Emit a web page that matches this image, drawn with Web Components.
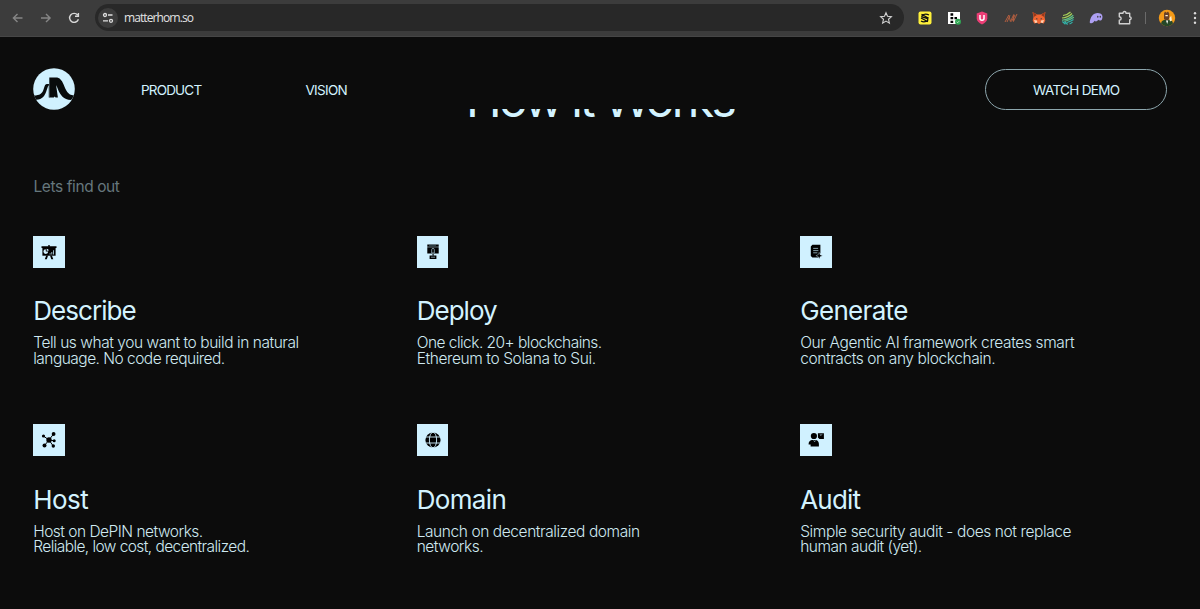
<!DOCTYPE html>
<html lang="en"><head><meta charset="utf-8"><title>Matterhorn</title>
<style>html,body{margin:0;background:#0c0c0c;height:609px;overflow:hidden}body{font-family:Inter,"Liberation Sans",sans-serif;color:#d3f3ff}</style></head>
<body><matter-app></matter-app>
<script>
const define=(name,html,setup)=>{
  const t=document.createElement('template');t.innerHTML=html;
  customElements.define(name,class extends HTMLElement{
    connectedCallback(){
      if(this.shadowRoot)return;
      this.attachShadow({mode:'open'}).append(t.content.cloneNode(true));
      if(setup)setup(this,this.shadowRoot);
    }
  });
};

// A single line tracked so that it fills the width in its "w" attribute.
define('tracked-line','<style>:host{display:block;white-space:nowrap}span{display:inline-block}</style><span><slot></slot></span>',(el,r)=>{
  const s=r.querySelector('span'),n=el.textContent.length;
  const extra=(+el.getAttribute('w')-s.getBoundingClientRect().width)/n;
  s.style.letterSpacing=extra.toFixed(3)+'px';
});

const icons={
describe:'<path d="M.5 2.2h6.8V1h1.4v1.2h6.8V4H.5z"/><path d="M1.4 4h13.2v7.7H1.4z"/><path d="M5.2 11.5h1.9L5.8 15.2H3.8zM9 11.5h1.9l1.4 3.7h-2z"/><path d="M4.8 5.2a2.4 2.4 0 1 0 2.4 2.4H4.8z" fill="#d0f1ff"/><path d="M5.7 4.7v2h2a2 2 0 0 0-2-2" fill="#d0f1ff"/><path d="M8.6 9.2h1v1.4h-1zM10.3 8h1v2.6h-1zM12 6.2h1v4.4h-1z" fill="#9dbcc7"/>',
deploy:'<path d="M2.3.6h11.4v2.2H2.3zM2.3 3.2h11.4v6.4H2.3zM7.2 9h1.6v3H7.2zM4.6 11.5h6.8v3.5H4.6z"/><path d="M6.7 7V5.7a1.3 1.3 0 0 1 2.6 0V9H6.7V7M7.9 9v2.8M6 13.2h4" fill="none" stroke="#a9c9d5" stroke-width=".7"/><path d="M4 1.6h7" stroke="#517078" stroke-width=".6"/>',
generate:'<path d="M4.4.8h8v8.4l-2.2 2v2.2H4.4L2.8 12V2.4z"/><path d="M5.2 4.4h4.9M5.2 6.6h5.2M5.2 8.8h4.2" stroke="#8fabb5" stroke-width=".9"/><path d="m11.2 8.4 1 2.3 2.3 1-2.3 1-1 2.3-1-2.3-2.3-1 2.3-1z" stroke="#d0f1ff" stroke-width=".4"/>',
host:'<path d="M8 8 2.4 4M8 8l4.5-6M8 8l-4.6 5.6M8 8l4.2 6M8 8l5.2.8" stroke="#000" stroke-width="1"/><circle cx="8" cy="8" r="2.7"/><circle cx="2.5" cy="4" r="1.6"/><circle cx="12.6" cy="2" r="1.9"/><circle cx="3.5" cy="13.6" r="2"/><circle cx="12.3" cy="14" r="1.7"/><circle cx="13.2" cy="8.8" r="1.5"/>',
domain:'<circle cx="8" cy="8" r="7.6"/><g fill="none" stroke="#d0f1ff" stroke-width=".9"><ellipse cx="8" cy="8" rx="3.6" ry="7.8"/><path d="M.5 5h15M.5 11h15"/></g>',
audit:'<circle cx="5.9" cy="4" r="3.1"/><path d="M.6 12.4c-.2-2.6 1.2-4.2 3.2-4.5h4.1c2 .3 3 2 3 4.2v2.5H2.6v-2zM9.9 1.2h6v5.7h-4.5L9.9 5.4z"/><path d="m12.2 2.2.3 1.2 1.8-1M5.7 8.2l.9 1.6.9-1.4" fill="none" stroke="#9dbcc7" stroke-width=".7"/>'};

define('feature-card',`<style>:host{display:block}
.i{width:31.5px;height:31.5px;background:#d0f1ff;display:grid;place-items:center;margin-left:.3px}
h2{font-size:26px;line-height:32px;font-weight:400;margin:27px 0 0}
.b{font-size:15.5px;font-weight:300;line-height:15.7px;margin-top:8.3px;color:#cfe9f1}
:host([lower]) h2{margin-top:28.2px}:host([lower]) .b{margin-top:7.6px}
svg{width:16px;height:16px;display:block}</style>
<div class="i"><svg viewBox="0 0 16 16"></svg></div><h2><slot name="title"></slot></h2><div class="b"><slot></slot></div>`,
(el,r)=>{r.querySelector('svg').innerHTML=icons[el.getAttribute('icon')]});

define('browser-bar',`<style>:host{display:flex;box-sizing:border-box;height:37px;background:#3c3c3c;border-bottom:1px solid #464646;align-items:center;padding:0 0 1px 10px}
.nav{display:flex;gap:12px;margin-right:13px}svg{display:block;flex:none}
.url{display:flex;align-items:center;width:809px;flex:none;height:27px;border-radius:14px;background:#282828;box-sizing:border-box;padding:0 11px 0 3px;font:12px "Open Sans","Noto Sans",sans-serif;color:#e3e3e3}
.url tracked-line{flex:1;margin-left:6px}
.ext{display:flex;flex:none;gap:12.5px;margin-left:13px}.sep{flex:none;width:1px;height:12px;background:#6a6a6a;margin:0 12px 0 12px}</style>
<div class="nav">
<svg width="16" height="16" viewBox="0 0 16 16" fill="none" stroke="#858585" stroke-width="1.4"><path d="M12.5 8H3.5M7.5 3.9 3.4 8l4.1 4.1"/></svg>
<svg width="16" height="16" viewBox="0 0 16 16" fill="none" stroke="#858585" stroke-width="1.4"><path d="M3 8h9M8 3.9 12.1 8 8 12.1"/></svg>
<svg width="16" height="16" viewBox="0 0 16 16" fill="none" stroke="#d8d8d8" stroke-width="1.4"><path d="M12.4 9.2A4.5 4.5 0 1 1 11.6 5M12.4 2.9v3.3H9"/></svg></div>
<div class="url"><svg width="20" height="20" viewBox="0 0 20 20"><circle cx="10" cy="10" r="10" fill="#3c3c3c"/><g fill="none" stroke="#dedede" stroke-width="1.3"><circle cx="7" cy="7" r="1.5"/><path d="M10 7h4.5M5 12.8h5"/><circle cx="13" cy="12.8" r="1.5"/></g></svg>
<tracked-line w="69">matterhorn.so</tracked-line>
<svg width="14" height="14" viewBox="0 0 14 14" fill="none" stroke="#d2d2d2" stroke-width="1.1"><path d="m7 1.7 1.5 3.6 3.9.4-2.9 2.6.9 3.8L7 10.1l-3.4 2 .9-3.8-2.9-2.6 3.9-.4z"/></svg></div>
<div class="ext">
<svg width="16" height="16" viewBox="0 0 16 16"><rect x="1.5" y="1.5" width="13" height="13" rx="2" fill="#fff13b"/><path d="M12 5C8 3 4 5 5 7l5 1.4c3 2.7-3 4.4-6 2.6M4.5 4.2l7.2 4M4 8l7 3.8" fill="none" stroke="#111" stroke-width="1.3"/></svg>
<svg width="16" height="16" viewBox="0 0 16 16"><path fill="#fff" d="M2 2h12v12H2z"/><path d="M4.5 3.2h2.7v2.5H4.5zM4.5 7h2.7v2.3H4.5zM8.5 7H11v2.3H8.5zM4.5 10.7h2.7V13H4.5z"/><circle cx="12" cy="11.8" r="3" fill="#30a653"/><path d="m10.7 11.8 1 .9 1.7-1.8" stroke="#fff" fill="none" stroke-width=".6"/></svg>
<svg width="16" height="16" viewBox="0 0 16 16"><path d="m8 1.6 5.3 1.9v4.8c0 3-2.1 4.5-5.3 6.2-3.2-1.7-5.3-3.2-5.3-6.2V3.5z" fill="#ec3e76"/><path d="M6 5v3.4c0 2.3 4 2.3 4 0V5" fill="none" stroke="#fff" stroke-width="1.5"/></svg>
<svg width="16" height="16" viewBox="0 0 16 16" fill="none" stroke="#b15e40" stroke-width="1"><path d="m2 12 3.8-7 1.6 6.5 3.4-7-.4 7L14 4M4 12l3-6.5M8.5 11.5 12 5"/></svg>
<svg width="16" height="16" viewBox="0 0 16 16"><path d="m1.5 2 4.7 2.5h3.6L14.5 2l-1 5 .8 3.5-1.5 3-3-.8-1 1H7.2l-1-1-3 .8-1.5-3L2.5 7z" fill="#ef6431"/><path d="m2 2 4 3-3.2 2zM14 2l-4 3 3.2 2z" fill="#93391e"/><path d="m3 10 3 .5.3 2L4 13zm10 0-3 .5-.3 2L12 13z" fill="#ffd0b0"/><path d="m5 8 1.5.6L6 10zM11 8l-1.5.6.5 1.4z" fill="#29384b"/></svg>
<svg width="16" height="16" viewBox="0 0 16 16" fill="none" stroke-width="1.15"><path d="M3 5.5c3-.5 5-1 7.5-3.5M2 8c5-.3 7-1.5 10-4.5" stroke="#a5cf58"/><path d="M2 10.2c5-.6 8-2 11.3-5M4.5 11.5c4-1 6-2 9.4-4.3" stroke="#60bf88"/><path d="M7 12.5c3-.8 4.8-1.8 6.5-3M9.5 14c1.3-.5 2.2-1 3-2M2.4 11.5l3 2.7M4.6 11.5l3 3" stroke="#31b5ac"/></svg>
<svg width="16" height="16" viewBox="0 0 16 16"><path d="M1.7 12.5C2.3 7 5 3 9.7 3c4 0 5.7 2.8 4.4 6-.8 2.3-3 1.7-4 .8-.7 1.4-2.4 2.4-3.4 1-1 1.5-3.3 3.8-5 1.7" fill="#ad9ff2"/><ellipse cx="9.8" cy="6.7" rx=".7" ry="1" fill="#3c3c3c"/><ellipse cx="12.3" cy="6.7" rx=".7" ry="1" fill="#3c3c3c"/></svg>
<svg width="16" height="16" viewBox="0 0 16 16" fill="none" stroke="#d0d0d0" stroke-width="1.4"><path d="M2.3 3.2H6V3a1.5 1.5 0 0 1 3 0v.2h3.7v3.7h.1a1.4 1.4 0 0 1 0 2.8h-.1v4H2.3v-3.4c2.5-.3 2.5-3.2 0-3.6z" stroke-linejoin="round"/></svg></div>
<div class="sep"></div>
<svg width="18" height="18" viewBox="0 0 18 18"><circle cx="9" cy="9" r="8.2" fill="#f39a18"/><path d="M3 14.5c.5-3 2.5-4 6-4s5.7 1 6 4c-3 3.4-9 3.4-12 0" fill="#264728"/><path d="M6 4.5 7 2.4l1.5 1.4L10 2.5l1.3 2v5L9 12l-3-2z" fill="#684027"/><path d="M7.4 6h2.4v1.2H7.4zM11.5 9l1.7-2.2.7 4.7-2 1z" fill="#fff0d4"/><path d="m8 11.5 1.2 3.4 1-3.4z" fill="#fff"/></svg>
<svg width="16" height="16" viewBox="0 0 16 16" fill="#dcdcdc" style="margin-left:11px"><circle cx="8" cy="3.2" r="1.2"/><circle cx="8" cy="8" r="1.2"/><circle cx="8" cy="12.8" r="1.2"/></svg>`);

define('site-header',`<style>:host{display:flex;box-sizing:border-box;height:72px;align-items:flex-start;padding:31px 33px 0 32.5px;font-size:13.5px;line-height:18px}
svg{display:block;margin-right:66.5px}.p{width:164.5px}.p,.v{margin-top:12.5px}.btn{margin:.6px 0 0 auto;box-sizing:border-box;width:182px;height:41px;border:1px solid #8ca6ad;border-radius:21px;display:flex;align-items:center;padding:1px 0 0 47px}</style>
<svg width="42" height="42" viewBox="0 0 42 42"><circle cx="21" cy="21" r="20.8" fill="#d0f1ff"/><path d="M1 27.5c5.5 0 8.5-2 9.7-6.5 1-3.7 1.8-5 3.3-5h2.3V9.5h6.5c4 0 6 2.7 7.8 7 2.2 5.5 4.2 10.7 10.2 10.9-1 2-1.8 3.5-2.8 4.5-7.5-.2-10.7-5-13.2-11-.6-1.6-1-2.6-1.7-3.7l1.8 12.2h-2.3l-1-1-.8 1h-5V17.2c-.9 1-1.2 2.2-1.9 4.3C12 28 9.5 31.5 3.2 31.7z" fill="#080b0c"/><path d="M16.3 16v13.4" stroke="#6d8288" stroke-width=".6"/></svg>
<tracked-line class="p" w="60.3">PRODUCT</tracked-line><tracked-line class="v" w="41.5">VISION</tracked-line>
<div class="btn"><tracked-line w="86.5">WATCH DEMO</tracked-line></div>`);

define('matter-app',`<style>:host{display:block;width:1200px;height:609px;overflow:hidden;background:#0c0c0c}
.clip{height:14px;overflow:hidden;display:flex;justify-content:center;align-items:flex-end}
h1{flex:none;margin:0 0 -2.5px;font-size:48px;line-height:52px;font-weight:400;color:#d3f3ff}
.sub{font-size:15.5px;line-height:20px;color:#66777d;margin:54px 0 0 33.5px}
.grid{display:grid;grid-template-columns:383.5px 383.5px 1fr;grid-template-rows:188.4px 189px;padding:39px 0 0 33.2px}</style>
<browser-bar></browser-bar><site-header></site-header>
<div class="clip"><h1><tracked-line w="268">How it Works</tracked-line></h1></div>
<div class="sub"><tracked-line w="86">Lets find out</tracked-line></div>
<div class="grid">
<feature-card icon="describe"><tracked-line slot="title" w="102.5">Describe</tracked-line><tracked-line w="265.5">Tell us what you want to build in natural</tracked-line><tracked-line w="191.5">language. No code required.</tracked-line></feature-card>
<feature-card icon="deploy"><tracked-line slot="title" w="80">Deploy</tracked-line><tracked-line w="185">One click. 20+ blockchains.</tracked-line><tracked-line w="179">Ethereum to Solana to Sui.</tracked-line></feature-card>
<feature-card icon="generate"><tracked-line slot="title" w="107.5">Generate</tracked-line><tracked-line w="274">Our Agentic AI framework creates smart</tracked-line><tracked-line w="195">contracts on any blockchain.</tracked-line></feature-card>
<feature-card lower icon="host"><tracked-line slot="title" w="55">Host</tracked-line><tracked-line w="169.5">Host on DePIN networks.</tracked-line><tracked-line w="216">Reliable, low cost, decentralized.</tracked-line></feature-card>
<feature-card lower icon="domain"><tracked-line slot="title" w="89.5">Domain</tracked-line><tracked-line w="223">Launch on decentralized domain</tracked-line><tracked-line w="66.5">networks.</tracked-line></feature-card>
<feature-card lower icon="audit"><tracked-line slot="title" w="60">Audit</tracked-line><tracked-line w="271">Simple security audit - does not replace</tracked-line><tracked-line w="121.5">human audit (yet).</tracked-line></feature-card>
</div>`);
</script></body></html>
